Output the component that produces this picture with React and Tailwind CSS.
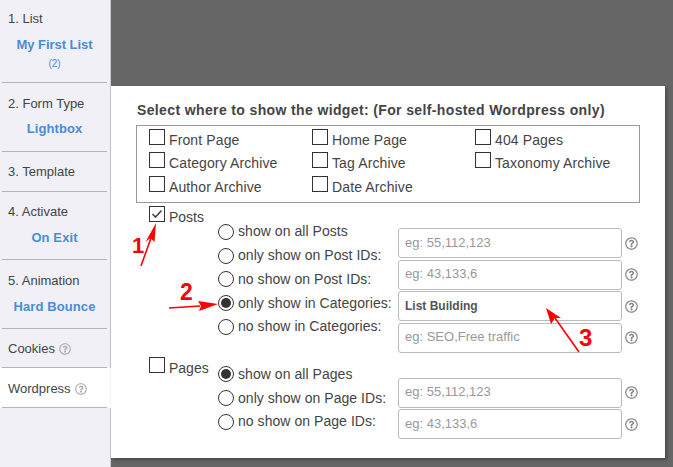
import { FaRegQuestionCircle } from 'react-icons/fa'

const steps = [
  { title: '1. List', value: 'My First List', note: '(2)', h: 'h-[83px] pt-[10px]', gap: 'mt-2 tracking-[-0.05px]' },
  { title: '2. Form Type', value: 'Lightbox', h: 'h-[69px] pt-[12px]', gap: 'mt-[7px] tracking-[0.1px]' },
  { title: '3. Template', h: 'h-[40px] pt-[11px]' },
  { title: '4. Activate', value: 'On Exit', h: 'h-[68px] pt-[11px]', gap: 'mt-2 tracking-[0.1px]' },
  { title: '5. Animation', value: 'Hard Bounce', h: 'h-[69px] pt-[12px]', gap: 'mt-2 tracking-[0.1px]' },
]

function Checkbox({ checked }) {
  return (
    <span className="w-4 h-4 shrink-0 border border-[#333] bg-white flex items-center justify-center">
      {checked && (
        <svg width="12" height="10" viewBox="0 0 12 10">
          <path d="M1.5 5 L4.5 8 L10.5 1.5" fill="none" stroke="#444" strokeWidth="1.6" />
        </svg>
      )}
    </span>
  )
}

function Radio({ checked, label }) {
  return (
    <div className="h-[23.75px] flex items-center gap-1">
      <span className="w-4 h-4 shrink-0 rounded-full border border-[#333] bg-white flex items-center justify-center">
        {checked && <span className="w-2.5 h-2.5 rounded-full bg-[#333]"></span>}
      </span>
      <span className="whitespace-nowrap tracking-[0.05px]">{label}</span>
    </div>
  )
}

function Field({ placeholder, value }) {
  return (
    <div className="flex items-center">
      <input
        readOnly
        placeholder={placeholder}
        value={value || ''}
        className="w-[224px] h-[30px] px-[6px] pb-[1px] bg-white border border-[#bbb] rounded-[3px] text-[12px] font-bold text-[#555] outline-none placeholder:text-[13px] placeholder:font-normal placeholder:text-[#999]"
      />
      <FaRegQuestionCircle className="mx-[3px] text-[#888] text-[13px]" />
    </div>
  )
}

function Check({ label }) {
  return (
    <div className="flex items-start gap-1">
      <Checkbox />
      <span className="leading-[20px] mt-[1px] whitespace-nowrap tracking-[0.12px]">{label}</span>
    </div>
  )
}

export default function App() {
  return (
    <div className="relative w-[673px] h-[467px] overflow-hidden flex font-['Liberation_Sans',Arial,sans-serif] text-[14px] text-[#444]">
      <aside className="w-[111px] shrink-0 bg-[#f0f0f6] border-r border-[#ccc] text-[13px]">
        {steps.map(s => (
          <div key={s.title} className={'mx-[2px] w-[105px] border-b border-[#b5b5b5] ' + s.h}>
            <div className="pl-[6px] leading-[18px]">{s.title}</div>
            {s.value && <div className={'text-center font-bold text-[#4a8cd6] leading-[18px] ' + s.gap}>{s.value}</div>}
            {s.note && <div className="text-center text-[10px] text-[#4a8cd6] leading-3 mt-[4px]">{s.note}</div>}
          </div>
        ))}
        <div className="mx-[2px] w-[105px] h-[39px] border-b border-[#b5b5b5] pl-[6px] pt-[2px] flex items-center gap-1">
          Cookies <FaRegQuestionCircle className="text-[#aaa] text-[12px]" />
        </div>
        <div className="-mr-px bg-white h-[40px]">
          <div className="mx-[2px] w-[105px] h-[40px] border-b border-[#b5b5b5] pl-[6px] pt-[3px] flex items-center gap-1">
            Wordpress <FaRegQuestionCircle className="text-[#aaa] text-[12px]" />
          </div>
        </div>
      </aside>

      <main className="flex-1 bg-[#666] pt-[86px]">
        <div className="w-[554px] h-[372px] bg-white shadow-[2px_2px_3px_#4a4a4a] pl-[25px] pt-[15px]">
          <h2 className="font-bold leading-[18px] tracking-[0.37px] pl-[1px]">Select where to show the widget: (For self-hosted Wordpress only)</h2>
          <div className="w-[504px] h-[78px] mt-[6px] border border-[#999] pl-[12px] pt-[3px] grid grid-cols-[163px_163px_163px] grid-rows-[23px_24px_23px]">
            <Check label="Front Page" />
            <Check label="Home Page" />
            <Check label="404 Pages" />
            <Check label="Category Archive" />
            <Check label="Tag Archive" />
            <Check label="Taxonomy Archive" />
            <Check label="Author Archive" />
            <Check label="Date Archive" />
          </div>

          <div className="flex pl-[13px] mt-[3px]">
            <div className="w-[69px] flex items-start gap-1">
              <Checkbox checked />
              <span className="leading-[20px] mt-[1px]">Posts</span>
            </div>
            <div className="w-[180px] pt-[14px]">
              <Radio label="show on all Posts" />
              <Radio label="only show on Post IDs:" />
              <Radio label="no show on Post IDs:" />
              <Radio checked label="only show in Categories:" />
              <Radio label="no show in Categories:" />
            </div>
            <div className="pt-[22px] flex flex-col gap-[1.5px]">
              <Field placeholder="eg: 55,112,123" />
              <Field placeholder="eg: 43,133,6" />
              <Field value="List Building" />
              <Field placeholder="eg: SEO,Free traffic" />
            </div>
          </div>

          <div className="flex pl-[13px] mt-[3px]">
            <div className="w-[69px] flex items-start gap-1 pt-[1px]">
              <Checkbox />
              <span className="leading-[20px] mt-[1px]">Pages</span>
            </div>
            <div className="w-[180px] pt-[7px]">
              <Radio checked label="show on all Pages" />
              <Radio label="only show on Page IDs:" />
              <Radio label="no show on Page IDs:" />
            </div>
            <div className="pt-[22px] flex flex-col gap-[1.5px]">
              <Field placeholder="eg: 55,112,123" />
              <Field placeholder="eg: 43,133,6" />
            </div>
          </div>
        </div>
      </main>

      {/* red annotations drawn over the form */}
      <svg className="absolute inset-0 pointer-events-none" width="673" height="467" viewBox="0 0 673 467">
        <path d="M141 266 L151 238" stroke="#f00" strokeWidth="1.6" fill="none" />
        <polygon points="156,223 145.5,242 150.5,238 154.5,242" fill="#f00" />
        <path d="M169 308 L200 306" stroke="#f00" strokeWidth="1.6" fill="none" />
        <polygon points="218,304 198,301 201,306 199,311" fill="#f00" />
        <path d="M579 352 L555 318" stroke="#f00" strokeWidth="1.6" fill="none" />
        <polygon points="546,308 551,324 555,318 561,318" fill="#f00" />
      </svg>
      <span className="absolute left-[132px] top-[233px] text-[22px] leading-[25px] font-bold text-[#f00]">1</span>
      <span className="absolute left-[180px] top-[279px] text-[23px] leading-[26px] font-bold text-[#f00]">2</span>
      <span className="absolute left-[579px] top-[324px] text-[24px] leading-[27px] font-bold text-[#f00]">3</span>
    </div>
  )
}
